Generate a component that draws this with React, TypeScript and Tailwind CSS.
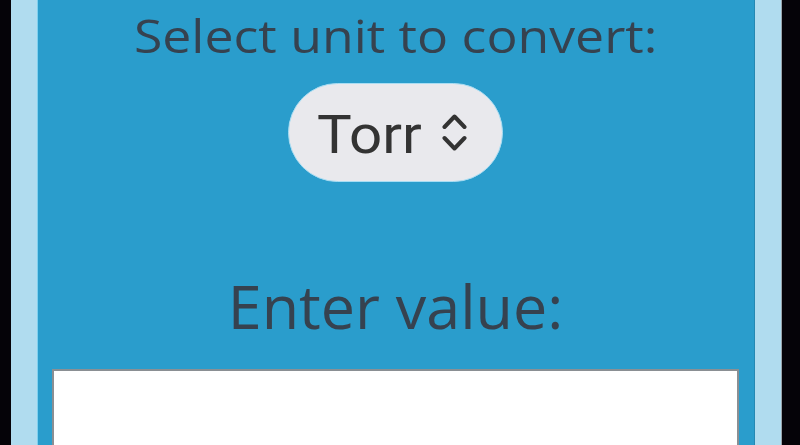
export default function App() {
  return (
    <div className="w-[800px] h-[445px] overflow-hidden bg-[#050308] pl-[11px] pr-[18px]">
      <div className="h-full bg-[#b0dcef] pl-[26px] pr-[26px] border-r border-[#9aa4ab]">
        <div className="h-full flex flex-col items-center bg-[#2a9dcc] border-l border-[#7fd0ee] border-r border-r-[#2488b3] pl-[14px] pr-[15px]">
          <h2
            className="mt-[8px] shrink-0 text-[46px] leading-[54px] text-[#36424f] font-normal scale-x-[1.125]"
            style={{ fontFamily: '"Open Sans", sans-serif' }}
          >
            Select unit to convert:
          </h2>

          <div className="mt-[21px] shrink-0 h-[99px] w-[215px] rounded-full bg-[#e9e9ed] border border-[#a9ddf3] flex items-center pl-[28px] pr-[35px] justify-between">
            <span
              className="mt-[5px] text-[53px] leading-none text-[#333333] origin-left scale-x-[1.1]"
              style={{ fontFamily: 'Roboto, sans-serif' }}
            >
              Torr
            </span>
            <svg width="25" height="39" viewBox="0 0 25 39" fill="none" stroke="#333333" strokeWidth="4" strokeLinecap="round" strokeLinejoin="round">
              <path d="M2.5 14 L12.5 3.5 L22.5 14" />
              <path d="M2.5 25 L12.5 35.5 L22.5 25" />
            </svg>
          </div>

          <h2
            className="mt-[88px] shrink-0 text-[61px] leading-[72px] text-[#36424f] font-normal"
            style={{ fontFamily: '"Open Sans", sans-serif' }}
          >
            Enter value:
          </h2>

          <input
            type="text"
            className="mt-[27px] w-full h-[100px] shrink-0 bg-white border-2 border-[#8a8f93] outline-none"
          />
        </div>
      </div>
    </div>
  );
}
